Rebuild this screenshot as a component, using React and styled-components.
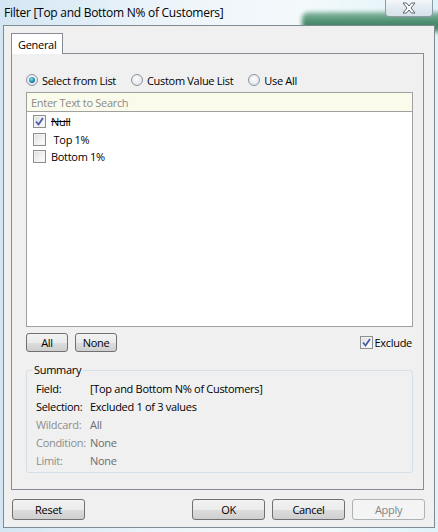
import React from "react";
import styled, { createGlobalStyle } from "styled-components";

const GlobalStyle = createGlobalStyle`
  html, body {
    margin: 0;
    padding: 0;
    background: #ffffff;
  }
  body {
    font-family: "Segoe UI", "Open Sans", "Liberation Sans", sans-serif;
    font-size: 11px;
    letter-spacing: -0.3px;
    color: #000;
  }
`;

const Window = styled.div`
  position: relative;
  width: 438px;
  height: 532px;
  box-sizing: border-box;
  display: flex;
  flex-direction: column;
  overflow: hidden;
  background: linear-gradient(90deg, #d4e6f3 0%, #eef5fa 40%, #f4fafc 70%, #dff3f8 100%);
`;

const TitleBar = styled.div`
  height: 25px;
  display: flex;
  align-items: center;
  padding-left: 4px;
  font-size: 12px;
  letter-spacing: -0.27px;
  color: #000;
`;

const GlassBlur = styled.div`
  position: absolute;
  left: 302px;
  top: 12px;
  width: 150px;
  height: 20px;
  border-radius: 6px;
  background: linear-gradient(180deg, #7fb39a 0%, #2f7a56 60%, #3f8a66 100%);
  filter: blur(2px);
  opacity: 0.9;
`;

const CloseButton = styled.div`
  position: absolute;
  right: 5px;
  top: -1px;
  width: 46px;
  height: 17px;
  border: 1px solid #8e9aa6;
  border-top: none;
  border-radius: 0 0 4px 4px;
  background: linear-gradient(180deg, #f6f9fb 0%, #e4ecf2 50%, #d6e0e8 100%);
  display: flex;
  align-items: center;
  justify-content: center;
  z-index: 2;
`;

const Frame = styled.div`
  flex: 1;
  display: flex;
  padding: 0 5px 4px 3px;
  position: relative;
  z-index: 1;
`;

const Client = styled.div`
  flex: 1;
  background: #f0f0f0;
  border: 1px solid #7f8a93;
  box-sizing: border-box;
  display: flex;
  flex-direction: column;
  padding: 7px 9px 0 7px;
`;

const TabStrip = styled.div`
  display: flex;
  height: 20px;
`;

const Tab = styled.div`
  width: 52px;
  box-sizing: border-box;
  border: 1px solid #898c95;
  border-bottom: none;
  background: #fff;
  padding: 3px 0 0 6px;
  margin-bottom: -1px;
  position: relative;
  z-index: 1;
`;

const Panel = styled.div`
  width: 413px;
  height: 437px;
  box-sizing: border-box;
  border: 1px solid #898c95;
  background: #f0f0f0;
  padding: 17px 10px 0 14px;
  display: flex;
  flex-direction: column;
`;

const RadioRow = styled.div`
  display: flex;
  align-items: center;
  height: 18px;
  margin-bottom: 3px;
`;

const RadioLabel = styled.label`
  display: flex;
  align-items: center;
  gap: 4px;
  margin-right: ${p => p.$gap}px;
`;

const RadioDot = styled.span`
  width: 12px;
  height: 12px;
  border-radius: 50%;
  box-sizing: border-box;
  border: 1px solid #8c95a1;
  background: radial-gradient(circle at 50% 40%, #ffffff 0%, #e3e6ea 70%, #d2d6db 100%);
  display: flex;
  align-items: center;
  justify-content: center;
  &::after {
    content: "";
    display: ${p => (p.$on ? "block" : "none")};
    width: 6px;
    height: 6px;
    border-radius: 50%;
    background: radial-gradient(circle at 40% 35%, #7fe0f0 0%, #2a8fb8 50%, #0f4f73 100%);
  }
`;

const SearchBox = styled.div`
  height: 20px;
  box-sizing: border-box;
  border: 1px solid #a0a0a0;
  background: #fbfbeb;
  color: #8a8a8a;
  padding: 0 0 0 4px;
  display: flex;
  align-items: center;
`;

const ListBox = styled.div`
  height: 215px;
  box-sizing: border-box;
  border: 1px solid #a0a0a0;
  border-top: none;
  background: #fff;
  padding: 1px 0 0 6px;
`;

const ListItem = styled.div`
  display: flex;
  align-items: center;
  height: 17.5px;
  gap: 5px;
`;

const ItemText = styled.span`
  text-decoration: ${p => (p.$struck ? "line-through" : "none")};
`;

const Box = styled.span`
  width: 13px;
  height: 13px;
  box-sizing: border-box;
  border: 1px solid #8f8f8f;
  background: linear-gradient(135deg, #dcdcdc 0%, #f4f4f4 60%, #ffffff 100%);
  box-shadow: inset 0 0 0 1px #f2f2f2;
  display: flex;
  align-items: center;
  justify-content: center;
  flex-shrink: 0;
`;

const ButtonRow = styled.div`
  display: flex;
  align-items: center;
  gap: 7px;
  margin-top: 6px;
  height: 19px;
`;

const SmallButton = styled.div`
  width: ${p => p.$w}px;
  height: 19px;
  box-sizing: border-box;
  border: 1px solid #707070;
  border-radius: 3px;
  background: linear-gradient(180deg, #f2f2f2 0%, #ebebeb 50%, #dddddd 51%, #cfcfcf 100%);
  display: flex;
  align-items: center;
  justify-content: center;
`;

const ExcludeLabel = styled.label`
  margin-left: auto;
  margin-right: 1px;
  display: flex;
  align-items: center;
  gap: 2px;
`;

const GroupBox = styled.div`
  margin-top: 18px;
  height: 103px;
  box-sizing: border-box;
  border: 1px solid #d5dfe5;
  border-radius: 3px;
  position: relative;
  padding: 9px 0 0 9px;
`;

const Legend = styled.span`
  position: absolute;
  top: -9px;
  left: 5px;
  padding: 0 2px;
  background: #f0f0f0;
`;

const SummaryRow = styled.div`
  display: flex;
  height: 17.8px;
  align-items: center;
  white-space: nowrap;
  color: ${p => (p.$dim ? "#8d8d8d" : "#000")};
`;

const SummaryKey = styled.span`
  width: 54px;
  flex-shrink: 0;
`;

const SummaryValue = styled.span`
  color: ${p => (p.$dim ? "#6d6d6d" : "#000")};
`;

const Footer = styled.div`
  display: flex;
  align-items: center;
  gap: 7px;
  margin-top: 9px;
  padding-left: 1px;
`;

const DialogButton = styled.div`
  width: 73px;
  height: 21px;
  box-sizing: border-box;
  border: 1px solid ${p => (p.$disabled ? "#adb2b5" : "#707070")};
  border-radius: 3px;
  color: ${p => (p.$disabled ? "#838383" : "#000")};
  background: ${p =>
    p.$disabled
      ? "#f4f4f4"
      : "linear-gradient(180deg, #f2f2f2 0%, #ebebeb 50%, #dddddd 51%, #cfcfcf 100%)"};
  display: flex;
  align-items: center;
  justify-content: center;
  margin-left: ${p => p.$push || 0}px;
`;

const Check = () => (
  <svg width="9" height="9" viewBox="0 0 9 9">
    <path d="M1 4.5 L3.5 7.5 L8 1" fill="none" stroke="#4a5fa8" strokeWidth="1.8" />
  </svg>
);

const CloseGlyph = () => (
  <svg width="14" height="12" viewBox="0 0 14 12">
    <path
      d="M1 1 H4.5 L7 4 L9.5 1 H13 L9 6 L13 11 H9.5 L7 8 L4.5 11 H1 L5 6 Z"
      fill="#ffffff"
      stroke="#5a6470"
      strokeWidth="1"
      strokeLinejoin="round"
    />
  </svg>
);

const items = [
  { label: "Null", checked: true, struck: true },
  { label: "\u00a0Top 1%", checked: false },
  { label: "Bottom 1%", checked: false },
];

const summary = [
  { key: "Field:", value: "[Top and Bottom N% of Customers]" },
  { key: "Selection:", value: "Excluded 1 of 3 values" },
  { key: "Wildcard:", value: "All", dim: true },
  { key: "Condition:", value: "None", dim: true },
  { key: "Limit:", value: "None", dim: true },
];

export default function App() {
  return (
    <>
      <GlobalStyle />
      <Window>
        <GlassBlur />
        <CloseButton>
          <CloseGlyph />
        </CloseButton>
        <TitleBar>Filter [Top and Bottom N% of Customers]</TitleBar>
        <Frame>
          <Client>
            <TabStrip>
              <Tab>General</Tab>
            </TabStrip>
            <Panel>
              <RadioRow>
                <RadioLabel $gap={15}>
                  <RadioDot $on />
                  Select from List
                </RadioLabel>
                <RadioLabel $gap={15}>
                  <RadioDot />
                  Custom Value List
                </RadioLabel>
                <RadioLabel $gap={0}>
                  <RadioDot />
                  Use All
                </RadioLabel>
              </RadioRow>
              <SearchBox>Enter Text to Search</SearchBox>
              <ListBox>
                {items.map(item => (
                  <ListItem key={item.label}>
                    <Box>{item.checked && <Check />}</Box>
                    <ItemText $struck={item.struck}>{item.label}</ItemText>
                  </ListItem>
                ))}
              </ListBox>
              <ButtonRow>
                <SmallButton $w={42}>All</SmallButton>
                <SmallButton $w={42}>None</SmallButton>
                <ExcludeLabel>
                  <Box>
                    <Check />
                  </Box>
                  Exclude
                </ExcludeLabel>
              </ButtonRow>
              <GroupBox>
                <Legend>Summary</Legend>
                {summary.map(row => (
                  <SummaryRow key={row.key} $dim={row.dim}>
                    <SummaryKey>{row.key}</SummaryKey>
                    <SummaryValue $dim={row.dim}>{row.value}</SummaryValue>
                  </SummaryRow>
                ))}
              </GroupBox>
            </Panel>
            <Footer>
              <DialogButton>Reset</DialogButton>
              <DialogButton $push={100}>OK</DialogButton>
              <DialogButton>Cancel</DialogButton>
              <DialogButton $disabled>Apply</DialogButton>
            </Footer>
          </Client>
        </Frame>
      </Window>
    </>
  );
}
